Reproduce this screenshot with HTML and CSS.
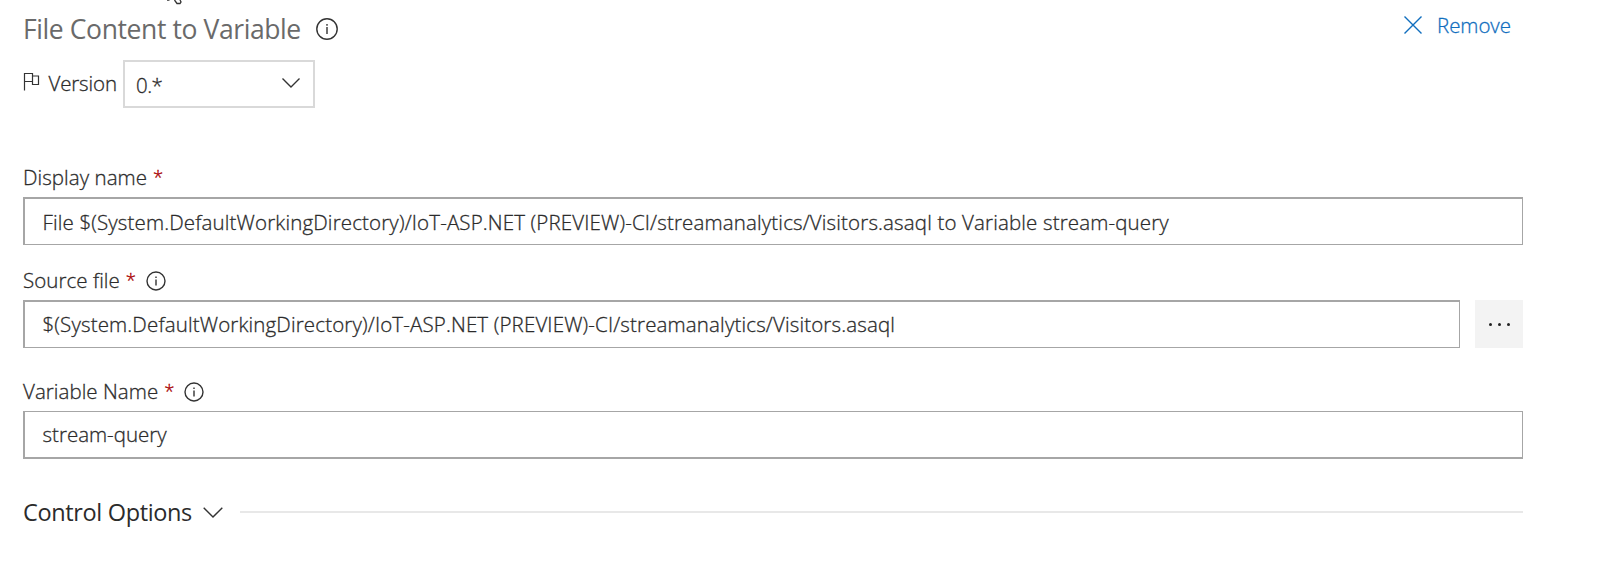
FILE: index.html
```html
<!DOCTYPE html>
<html lang="en">
<head>
<meta charset="utf-8">
<title>File Content to Variable</title>
<link rel="stylesheet" href="styles.css">
</head>
<body>
<svg class="cursor" width="16" height="5" viewBox="0 0 16 5"><path d="M0 0h2.500M7.500 0l2.500 3.500h3l1-1.500-1-2" fill="none" stroke="#333" stroke-width="1.300"/></svg>
<main class="panel">
  <header class="header">
    <h1 class="title"><span class="t-title">File Content to Variable</span></h1>
    <svg class="info info-lg" viewBox="0 0 22 22"><circle cx="11" cy="11" r="10.200"/><path d="M11 9v7M11 6v1.800"/></svg>
    <button class="remove"><svg class="x" viewBox="0 0 18 18"><path d="M.5.500l17 17M17.500.500l-17 17"/></svg><span class="t-remove">Remove</span></button>
  </header>
  <div class="version">
    <svg class="flag" viewBox="0 0 17 19"><path d="M1.500 18.500V1.500h8v8h-8M9.500 4h6v8.500H9.500v-3"/></svg>
    <span class="t-version">Version</span>
    <div class="select"><span class="t-zero">0.*</span><svg class="chev" viewBox="0 0 18 10"><path d="M.5.500L9 9l8.500-8.500"/></svg></div>
  </div>
  <section class="field field-display">
    <label class="label"><span class="t-display">Display name</span><span class="req">*</span></label>
    <div class="input"><span class="t-file">File $(System.DefaultWorkingDirectory)/IoT-ASP.NET (PREVIEW)-CI/streamanalytics/Visitors.asaql to Variable stream-query</span></div>
  </section>
  <section class="field field-source">
    <label class="label"><span class="t-source">Source file</span><span class="req">*</span><svg class="info" viewBox="0 0 20 20"><circle cx="10" cy="10" r="9"/><path d="M10 8.500v6M10 5.500v1.600"/></svg></label>
    <div class="row">
      <div class="input"><span class="t-file">$(System.DefaultWorkingDirectory)/IoT-ASP.NET (PREVIEW)-CI/streamanalytics/Visitors.asaql</span></div>
      <button class="more"><i></i><i></i><i></i></button>
    </div>
  </section>
  <section class="field field-variable">
    <label class="label"><span class="t-variable">Variable Name</span><span class="req">*</span><svg class="info" viewBox="0 0 20 20"><circle cx="10" cy="10" r="9"/><path d="M10 8.500v6M10 5.500v1.600"/></svg></label>
    <div class="input input-last"><span class="t-stream">stream-query</span></div>
  </section>
  <div class="control"><span class="t-control">Control Options</span><svg class="chev chev-lg" viewBox="0 0 20 11"><path d="M.7.700L10 10l9.300-9.300"/></svg><hr></div>
</main>
</body>
</html>
```
FILE: styles.css
```css
* { box-sizing: border-box; }
body { margin: 0; height: 561px; overflow: hidden; background: #fff; color: #2b2b2b; font: 300 20.500px/28px "Open Sans", "Noto Sans", sans-serif; white-space: nowrap; -webkit-text-stroke: .3px currentColor; }
svg { flex: none; fill: none; stroke: #333; stroke-width: 1.400; }
button { border: 0; padding: 0; background: none; font: inherit; }
.cursor { position: absolute; left: 167px; top: 0; }
.panel { width: 1523px; padding-left: 23px; }
.header { display: flex; height: 60px; padding-top: 10px; align-items: flex-start; }
.title { margin: 0; width: 293px; font-size: 26.500px; line-height: 39px; font-weight: 400; letter-spacing: -.4px; color: #6a6a6a; -webkit-text-stroke: 0; }
.info { width: 20px; height: 20px; margin-left: 12px; }
.info-lg { width: 22px; height: 22px; margin: 8px 0 0 0; }
.remove { display: flex; align-items: center; gap: 15px; width: 119px; height: 30px; margin-left: auto; color: #106ebe; }
.x { width: 18px; height: 18px; stroke: #106ebe; }
.t-remove { letter-spacing: -.05px; }
.version { display: flex; height: 48px; align-items: flex-start; }
.flag { width: 17px; height: 19px; margin-top: 12px; stroke-width: 1.200; }
.t-version { width: 83px; padding: 9px 0 0 8.500px; letter-spacing: -.15px; }
.select { display: flex; width: 192px; height: 48px; padding: 2px 13px 0 11px; align-items: center; justify-content: space-between; border: 2px solid #d9d9d9; }
.t-zero { letter-spacing: -.5px; }
.chev { width: 18px; height: 10px; margin-top: -4px; }
.field-display { margin-top: 52px; }
.field-source { margin-top: 18px; }
.field-variable { margin-top: 26px; }
.label { display: flex; height: 37px; padding-bottom: 4px; align-items: center; letter-spacing: .05px; }
.label .info { margin-top: 3px; }
.req { width: 8px; margin-left: 6px; font-size: 18.500px; color: #a80000; }
.row { display: flex; gap: 15px; }
.input { flex: 1; height: 48px; padding: 9px 0 0 17.500px; border: 1px solid #a6a6a6; border-top-width: 2px; border-left-width: 2px; }
.row .input { padding-top: 8px; }
.input-last { padding-top: 8px; border-top-width: 1px; border-bottom-width: 2px; }
.t-file { letter-spacing: .147px; }
.control { display: flex; height: 40px; margin-top: 33px; align-items: center; font-size: 23.500px; font-weight: 400; letter-spacing: -.35px; -webkit-text-stroke: 0; }
.more { display: flex; width: 48px; height: 48px; gap: 6px; align-items: center; justify-content: center; background: #f3f3f3; }
.more i { width: 3px; height: 3px; border-radius: 50%; background: #222; }
.t-control { width: 168px; }
.chev-lg { width: 20px; height: 11px; margin: 0 17px 0 12px; }
.control hr { flex: 1; height: 2px; margin: 0; border: 0; background: #e8e8e8; }
```
